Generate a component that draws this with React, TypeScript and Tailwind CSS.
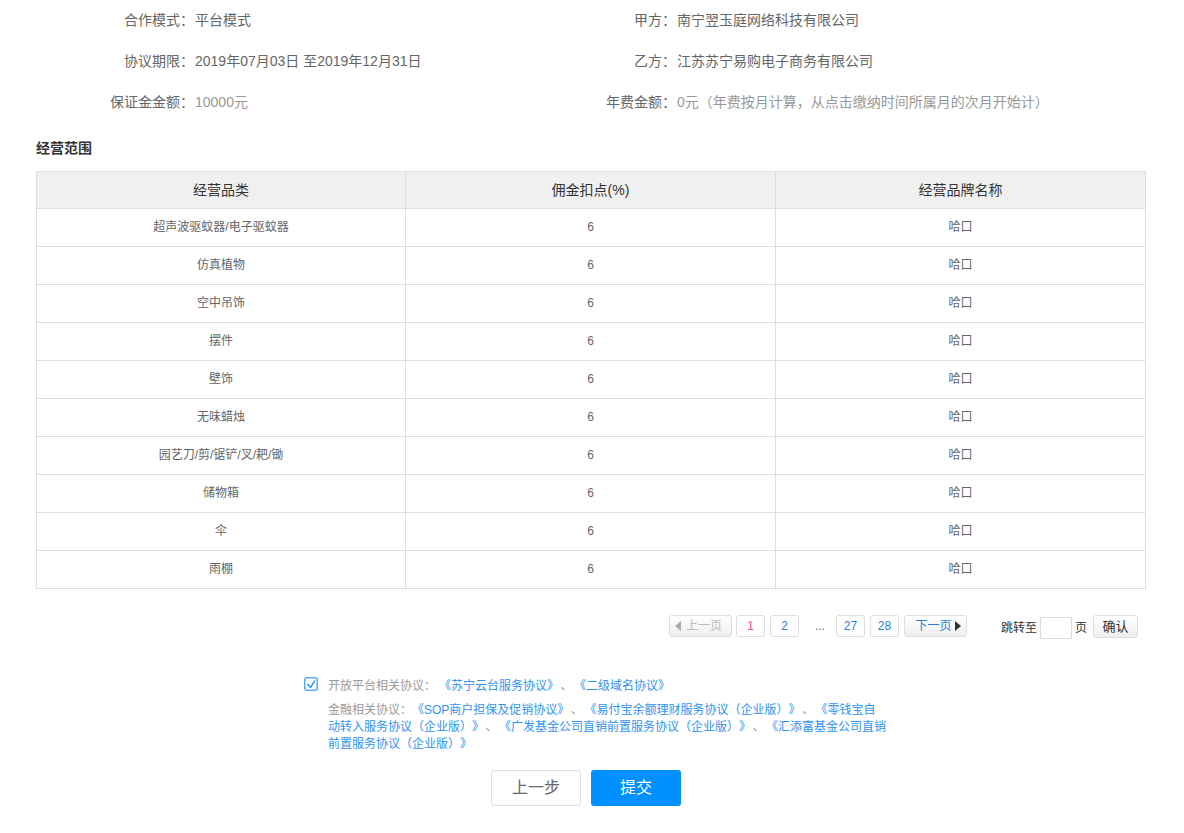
const rows = [
  "超声波驱蚊器/电子驱蚊器",
  "仿真植物",
  "空中吊饰",
  "摆件",
  "壁饰",
  "无味蜡烛",
  "园艺刀/剪/锯铲/叉/耙/锄",
  "储物箱",
  "伞",
  "雨棚",
];

function InfoRow({ label, value, label2, value2, muted }: { label: string; value: string; label2: string; value2: string; muted?: boolean }) {
  const valueColor = muted ? "text-[#999]" : "text-[#666]";
  return (
    <div className="flex h-[41px] items-center pb-[2px] text-sm text-[#666] [text-spacing-trim:space-all]">
      <div className="w-[195px] pr-px text-right">{label}</div>
      <div className={`w-[287px] ${valueColor}`}>{value}</div>
      <div className="w-[195px] pr-px text-right">{label2}</div>
      <div className={valueColor}>{value2}</div>
    </div>
  );
}

function PageNum({ n, active }: { n: string; active?: boolean }) {
  return (
    <a className={`flex h-[22px] w-[29px] items-center justify-center rounded-[3px] border border-[#ddd] text-xs ${active ? "text-[#f0508c]" : "text-[#2b7fd8]"}`}>
      {n}
    </a>
  );
}

function Sep() {
  return <span className="px-[1.5px] text-[#999]">、</span>;
}

export default function App() {
  return (
    <div className="h-[833px] w-[1184px] overflow-hidden bg-white font-['Liberation_Sans','Noto_Sans_CJK_SC',sans-serif]">
      <InfoRow label="合作模式：" value="平台模式" label2="甲方：" value2="南宁翌玉庭网络科技有限公司" />
      <InfoRow label="协议期限：" value="2019年07月03日 至2019年12月31日" label2="乙方：" value2="江苏苏宁易购电子商务有限公司" />
      <InfoRow label="保证金金额：" value="10000元" label2="年费金额：" value2="0元（年费按月计算，从点击缴纳时间所属月的次月开始计）" muted />

      <h3 className="mt-[15px] ml-[36px] h-[20px] text-sm leading-[20px] font-bold text-[#333]">经营范围</h3>

      <table className="mt-[13px] ml-[36px] w-[1110px] table-fixed border-collapse border border-[#ddd] text-center">
        <thead>
          <tr className="h-[37px] bg-[#f0f0f0] text-sm text-[#333]">
            <th className="w-[369px] border border-[#ddd] font-normal">经营品类</th>
            <th className="w-[370px] border border-[#ddd] font-normal">佣金扣点(%)</th>
            <th className="border border-[#ddd] font-normal">经营品牌名称</th>
          </tr>
        </thead>
        <tbody className="text-xs text-[#666]">
          {rows.map((name) => (
            <tr key={name} className="h-[38px]">
              <td className="border border-[#ddd] pb-[2px]">{name}</td>
              <td className="border border-[#ddd] pb-[2px]">6</td>
              <td className="border border-[#ddd] pb-[2px]">哈口</td>
            </tr>
          ))}
        </tbody>
      </table>

      <div className="mt-[26px] ml-[669px] flex h-[24px] items-start text-xs">
        <a className="flex h-[22px] w-[63px] items-center justify-center gap-[5px] rounded-[3px] border border-[#ddd] bg-gradient-to-b from-white to-[#eee] pr-[4px] text-[#bbb]">
          <span className="h-0 w-0 border-y-[5px] border-r-[6px] border-y-transparent border-r-[#aaa]" />
          上一页
        </a>
        <div className="ml-[4px] flex gap-[5px]">
          <PageNum n="1" active />
          <PageNum n="2" />
        </div>
        <span className="flex h-[22px] w-[37px] items-center justify-center pl-[5px] text-[#666]">...</span>
        <div className="flex gap-[5px]">
          <PageNum n="27" />
          <PageNum n="28" />
        </div>
        <a className="ml-[5px] flex h-[22px] w-[63px] items-center justify-center gap-[3px] rounded-[3px] border border-[#ddd] bg-gradient-to-b from-white to-[#eee] pl-[5px] text-[#2b7fd8]">
          下一页
          <span className="h-0 w-0 border-y-[5px] border-l-[6px] border-y-transparent border-l-[#333]" />
        </a>
        <span className="mt-[2px] ml-[34px] flex h-[22px] items-center text-[#333]">跳转至</span>
        <input className="mt-[2px] ml-[3px] h-[22px] w-[32px] border border-[#ddd]" />
        <span className="mt-[2px] ml-[3px] flex h-[22px] items-center text-[#333]">页</span>
        <button className="ml-[6px] h-[23px] w-[45px] rounded-[3px] border border-[#ddd] bg-gradient-to-b from-white to-[#eee] text-[13px] text-[#333]">确认</button>
      </div>

      <div className="mt-[37px] ml-[304px] flex w-[590px] items-start text-xs leading-[17px] [text-spacing-trim:space-all]">
        <svg viewBox="0 0 14 14" className="mt-[1px] h-[14px] w-[14px] shrink-0" fill="none">
          <rect x="0.75" y="0.75" width="12.5" height="12.5" rx="2.5" stroke="#5aaef5" strokeWidth="1.5" />
          <path d="M3.3 7 6.7 10.3 10.7 3.7" stroke="#2f93f0" strokeWidth="1.5" />
        </svg>
        <div className="mt-[2px] ml-[10px] w-[559px] text-[#2f93f0]">
          <p>
            <span className="pr-[3px] text-[#999]">开放平台相关协议：</span>《苏宁云台服务协议》<Sep />《二级域名协议》
          </p>
          <p className="mt-[7px]">
            <span className="text-[#999]">金融相关协议：</span>《SOP商户担保及促销协议》<Sep />《易付宝余额理财服务协议（企业版）》<Sep />《零钱宝自动转入服务协议（企业版）》<Sep />《广发基金公司直销前置服务协议（企业版）》<Sep />《汇添富基金公司直销前置服务协议（企业版）》
          </p>
        </div>
      </div>

      <div className="mt-[17px] ml-[491px] flex gap-[10px] text-base">
        <button className="h-[36px] w-[90px] rounded-[3px] border border-[#ddd] bg-white text-[#666]">上一步</button>
        <button className="h-[36px] w-[90px] rounded-[3px] bg-[#0090ff] text-white">提交</button>
      </div>
    </div>
  );
}
